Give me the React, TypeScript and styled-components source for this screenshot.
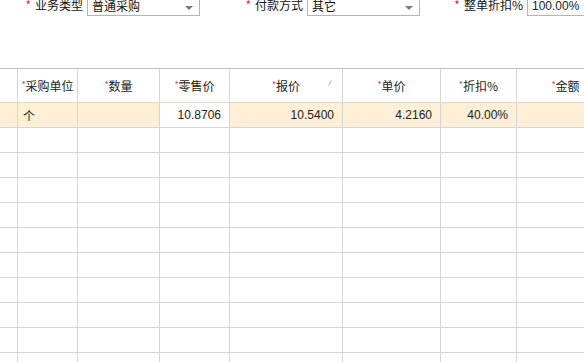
import React from 'react';
import styled, { createGlobalStyle } from 'styled-components';

const GlobalStyle = createGlobalStyle`
  html, body {
    margin: 0;
    padding: 0;
    background: #ffffff;
    font-family: 'Liberation Sans', 'Noto Sans CJK SC', sans-serif;
    font-size: 12px;
    color: #222;
  }
`;

const Page = styled.div`
  width: 584px;
  height: 362px;
  overflow: hidden;
`;

const FormBar = styled.div`
  display: flex;
  align-items: flex-start;
  margin-top: -6px;
  height: 22px;
`;

const Field = styled.div`
  display: flex;
  align-items: flex-start;
`;

const FieldLabel = styled.label<{ $width: number }>`
  width: ${(p) => p.$width}px;
  box-sizing: border-box;
  padding-right: 4px;
  padding-top: 3px;
  text-align: right;
  white-space: nowrap;
  font-family: 'Noto Sans CJK SC', sans-serif;
  font-size: 12px;
  line-height: 16px;
  color: #111;
`;

const Required = styled.span`
  color: #c8305c;
  margin-right: 4px;
`;

const SelectBox = styled.div`
  width: 113px;
  height: 22px;
  box-sizing: border-box;
  border: 1px solid #b4b4b4;
  background: #fff;
  display: flex;
  align-items: flex-start;
  justify-content: space-between;
  padding: 3px 6px 0 4px;
  font-family: 'Noto Sans CJK SC', sans-serif;
  font-size: 12px;
  line-height: 16px;
  color: #111;
`;

const Caret = styled.span`
  margin-top: 8px;
  width: 0;
  height: 0;
  border-left: 4px solid transparent;
  border-right: 4px solid transparent;
  border-top: 4px solid #7a7a7a;
`;

const TextInput = styled.div`
  width: 80px;
  height: 22px;
  box-sizing: border-box;
  border: 1px solid #b4b4b4;
  border-right: none;
  padding: 4px 0 0 4px;
  font-size: 12px;
  line-height: 14px;
  color: #222;
`;

const Grid = styled.table`
  margin-top: 52px;
  table-layout: fixed;
  width: 615px;
  border-collapse: separate;
  border-spacing: 0;
  border-top: 1px solid #c4c4c4;
`;

const HeadCell = styled.th`
  position: relative;
  height: 34px;
  box-sizing: border-box;
  border-right: 1px solid #d6d6d6;
  border-bottom: 1px solid #e0d8cc;
  padding: 0;
  text-align: center;
  font-weight: normal;
  font-family: 'Noto Sans CJK SC', sans-serif;
  font-size: 12px;
  color: #222;
  white-space: nowrap;
`;

const Star = styled.sup`
  color: #d0406a;
  font-size: 9px;
  vertical-align: 3px;
  line-height: 0;
`;

const EditMark = styled.svg`
  position: absolute;
  right: 10px;
  top: 11px;
`;

const Row = styled.tr<{ $active?: boolean }>`
  height: 25px;
  background: ${(p) => (p.$active ? '#feefd7' : '#ffffff')};
`;

const Cell = styled.td<{ $align?: 'left' | 'right'; $plain?: boolean }>`
  box-sizing: border-box;
  border-right: 1px solid #d6d6d6;
  border-bottom: 1px solid #d6d6d6;
  padding: ${(p) => (p.$align === 'right' ? '0 8px 0 0' : '0 0 0 5px')};
  text-align: ${(p) => p.$align ?? 'left'};
  background: ${(p) => (p.$plain ? '#ffffff' : 'transparent')};
  font-family: 'Liberation Sans', 'Noto Sans CJK SC', sans-serif;
  font-size: 12px;
  color: #222;
  white-space: nowrap;
  overflow: hidden;
`;

const columns = [
  { key: 'no', title: '', width: 18 },
  { key: 'unit', title: '采购单位', width: 60, required: true },
  { key: 'qty', title: '数量', width: 82, required: true },
  { key: 'retail', title: '零售价', width: 70, required: true },
  { key: 'quote', title: '报价', width: 113, required: true, editable: true },
  { key: 'price', title: '单价', width: 98, required: true },
  { key: 'discount', title: '折扣%', width: 76, required: true },
  { key: 'amount', title: '金额', width: 98, required: true },
];

const emptyRows = Array.from({ length: 10 }, (_, i) => i);

export default function App() {
  return (
    <Page>
      <GlobalStyle />
      <FormBar>
        <Field>
          <FieldLabel $width={87}>
            <Required>*</Required>业务类型
          </FieldLabel>
          <SelectBox>
            普通采购
            <Caret />
          </SelectBox>
        </Field>
        <Field>
          <FieldLabel $width={107}>
            <Required>*</Required>付款方式
          </FieldLabel>
          <SelectBox>
            其它
            <Caret />
          </SelectBox>
        </Field>
        <Field>
          <FieldLabel $width={107}>
            <Required>*</Required>整单折扣%
          </FieldLabel>
          <TextInput>100.00%</TextInput>
        </Field>
      </FormBar>

      <Grid>
        <colgroup>
          {columns.map((c) => (
            <col key={c.key} style={{ width: c.width }} />
          ))}
        </colgroup>
        <thead>
          <tr>
            {columns.map((c) => (
              <HeadCell key={c.key}>
                {c.required && <Star>*</Star>}
                {c.title}
                {c.editable && (
                  <EditMark width="4" height="6" viewBox="0 0 4 6">
                    <line x1="3.5" y1="0.5" x2="0.5" y2="5.5" stroke="#9a9a9a" strokeWidth="0.8" />
                  </EditMark>
                )}
              </HeadCell>
            ))}
          </tr>
        </thead>
        <tbody>
          <Row $active>
            <Cell />
            <Cell>个</Cell>
            <Cell />
            <Cell $align="right" $plain>10.8706</Cell>
            <Cell $align="right">10.5400</Cell>
            <Cell $align="right">4.2160</Cell>
            <Cell $align="right">40.00%</Cell>
            <Cell />
          </Row>
          {emptyRows.map((r) => (
            <Row key={r}>
              {columns.map((c) => (
                <Cell key={c.key} />
              ))}
            </Row>
          ))}
        </tbody>
      </Grid>
    </Page>
  );
}
